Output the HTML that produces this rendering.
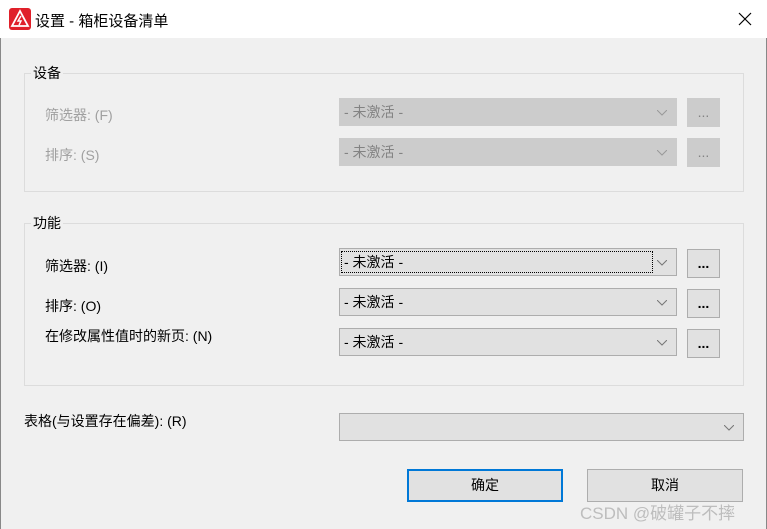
<!DOCTYPE html>
<html><head><meta charset="utf-8"><style>
*{margin:0;padding:0;box-sizing:border-box}
body{width:767px;height:529px;background:#f0f0f0;font-family:"Liberation Sans","Noto Sans CJK SC",sans-serif;font-size:14px;color:#000;position:relative;overflow:hidden}
.a{position:absolute;white-space:nowrap}
.title{left:0;top:0;width:767px;height:38px;background:#fff}
.grp{border:1px solid #dcdcdc}
.lg{background:#f0f0f0;padding:0 2px;line-height:16px}
.cb{border:1px solid #adadad;background:#e1e1e1;height:28px;line-height:26px;padding-left:4px}
.cb.d{border-color:#cccccc;background:#cccccc;color:#838383}
.cb svg{position:absolute;right:9px;top:11px}
.bt{border:1px solid #adadad;background:#e1e1e1;width:33px;height:29px;text-align:center;line-height:26px;font-weight:bold;color:#000}
.bt.d{border-color:#cccccc;background:#cccccc;color:#838383;font-weight:normal}
.dis{color:#a0a0a0}
</style></head><body>
<div class="a title"></div>
<div class="a" style="left:0;top:38px;width:1px;height:491px;background:#888"></div>
<div class="a" style="left:766px;top:38px;width:1px;height:491px;background:#888"></div>
<svg class="a" style="left:9px;top:8px" width="22" height="22" viewBox="0 0 22 22"><rect width="22" height="22" rx="3" fill="#e0202a"/><path d="M11 3 L19 18 L3 18 Z" fill="none" stroke="#fff" stroke-width="1.8"/><path d="M12 8 L9 13 L12 13 L10 17" fill="none" stroke="#fff" stroke-width="1.4"/></svg>
<div class="a" style="left:35px;top:10px;font-size:15px">设置 - 箱柜设备清单</div>
<svg class="a" style="left:738px;top:12px" width="14" height="14"><path d="M1 1L13 13M13 1L1 13" stroke="#000" stroke-width="1.2"/></svg>

<div class="a grp" style="left:24px;top:73px;width:720px;height:119px"></div>
<div class="a lg" style="left:31px;top:65px">设备</div>
<div class="a dis" style="left:45px;top:105px">筛选器: (F)</div>
<div class="a dis" style="left:45px;top:145px">排序: (S)</div>
<div class="a cb d" style="left:339px;top:98px;width:338px">- 未激活 -<svg width="10" height="6"><path d="M0 0L5 5L10 0" fill="none" stroke="#999"/></svg></div>
<div class="a bt d" style="left:687px;top:98px">...</div>
<div class="a cb d" style="left:339px;top:138px;width:338px">- 未激活 -<svg width="10" height="6"><path d="M0 0L5 5L10 0" fill="none" stroke="#999"/></svg></div>
<div class="a bt d" style="left:687px;top:138px">...</div>

<div class="a grp" style="left:24px;top:223px;width:720px;height:163px"></div>
<div class="a lg" style="left:31px;top:215px">功能</div>
<div class="a" style="left:45px;top:256px">筛选器: (I)</div>
<div class="a" style="left:45px;top:296px">排序: (O)</div>
<div class="a" style="left:45px;top:326px">在修改属性值时的新页: (N)</div>
<div class="a cb" style="left:339px;top:248px;width:338px"><span style="outline:1px dotted #000;display:inline-block;width:310px;height:20px;line-height:20px;margin-left:-2px;padding-left:2px">- 未激活 -</span><svg width="10" height="6"><path d="M0 0L5 5L10 0" fill="none" stroke="#777"/></svg></div>
<div class="a bt" style="left:687px;top:249px">...</div>
<div class="a cb" style="left:339px;top:288px;width:338px">- 未激活 -<svg width="10" height="6"><path d="M0 0L5 5L10 0" fill="none" stroke="#777"/></svg></div>
<div class="a bt" style="left:687px;top:289px">...</div>
<div class="a cb" style="left:339px;top:328px;width:338px">- 未激活 -<svg width="10" height="6"><path d="M0 0L5 5L10 0" fill="none" stroke="#777"/></svg></div>
<div class="a bt" style="left:687px;top:329px">...</div>

<div class="a" style="left:24px;top:411px">表格(与设置存在偏差): (R)</div>
<div class="a cb" style="left:339px;top:413px;width:405px"><svg width="10" height="6"><path d="M0 0L5 5L10 0" fill="none" stroke="#777"/></svg></div>

<div class="a" style="left:407px;top:469px;width:156px;height:33px;border:2px solid #0078d7;background:#e1e1e1;text-align:center;line-height:29px">确定</div>
<div class="a" style="left:587px;top:469px;width:156px;height:33px;border:1px solid #adadad;background:#e1e1e1;text-align:center;line-height:31px">取消</div>
<div class="a" style="left:580px;top:499px;font-size:17px;color:#bdbdbd">CSDN @破罐子不摔</div>
</body></html>
